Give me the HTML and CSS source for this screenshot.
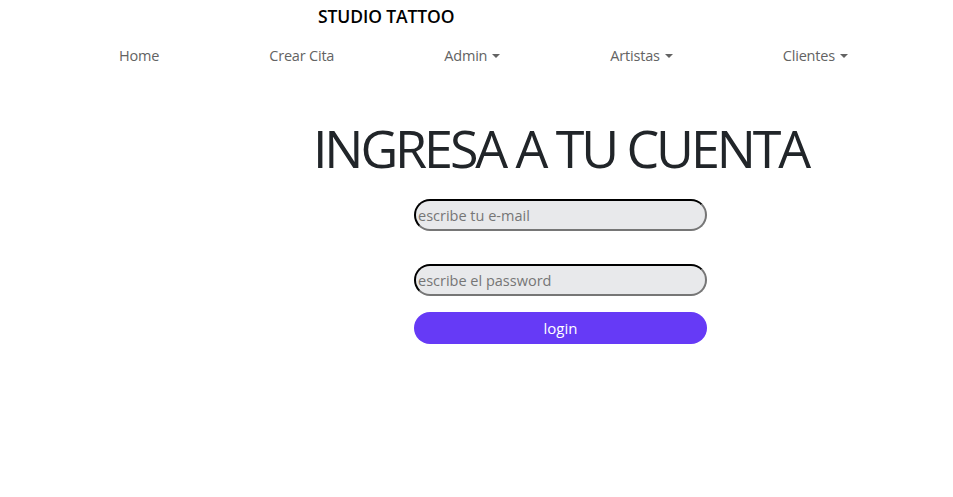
FILE: index.html
```html
<!DOCTYPE html>
<html lang="es">
<head>
<meta charset="utf-8">
<title>Studio Tattoo</title>
<link rel="stylesheet" href="styles.css">
</head>
<body>
<header class="header">
  <div class="brand">STUDIO TATTOO</div>
  <nav class="nav">
    <a class="nav-link" href="#">Home</a>
    <a class="nav-link" href="#">Crear Cita</a>
    <a class="nav-link dropdown" href="#">Admin</a>
    <a class="nav-link dropdown" href="#">Artistas</a>
    <a class="nav-link dropdown" href="#">Clientes</a>
  </nav>
</header>
<main class="main">
  <h1 class="title">INGRESA A TU CUENTA</h1>
  <form class="form">
    <input class="field" type="email" placeholder="escribe tu e-mail">
    <input class="field" type="password" placeholder="escribe el password">
    <button class="btn" type="button">login</button>
  </form>
</main>
</body>
</html>
```
FILE: styles.css
```css
* { box-sizing: border-box; }
body {
  margin: 0;
  font-family: "Open Sans", "Noto Sans", sans-serif;
  background: #fff;
  color: #212529;
}
.header { display: flex; flex-direction: column; }
.brand {
  padding-left: 318px;
  font-size: 17.5px;
  font-weight: 600;
  line-height: 33px;
  color: #000;
  letter-spacing: -0.1px;
}
.nav {
  display: flex;
  justify-content: space-around;
  padding: 1px 50px 0 64px;
}
.nav-link {
  padding: 8px 16px;
  font-size: 14.5px;
  line-height: 28px;
  color: #636363;
  text-decoration: none;
  letter-spacing: -0.2px;
}
.dropdown::after {
  content: "";
  display: inline-block;
  margin-left: 5px;
  vertical-align: 3px;
  border-top: 4px solid #636363;
  border-left: 4px solid transparent;
  border-right: 4px solid transparent;
}
.main {
  display: flex;
  flex-direction: column;
  align-items: center;
  padding-left: 168px;
}
.title {
  margin: 0;
  padding-top: 35px;
  font-size: 52px;
  font-weight: 400;
  line-height: 70px;
  color: #212529;
  letter-spacing: -3.1px;
}
.form {
  display: flex;
  flex-direction: column;
  width: 293px;
  margin-top: 16px;
}
.field {
  height: 32px;
  border: 2px inset #767676;
  border-color: #2b2b2b #767676 #767676 #2b2b2b;
  border-radius: 16px;
  background: #e8e9eb;
  padding: 0 2px;
  font-family: inherit;
  font-size: 14.5px;
  color: #333;
  margin-bottom: 33px;
}
.field + .field { margin-bottom: 16px; }
.field::placeholder { color: #767676; }
.btn {
  height: 32px;
  border: none;
  border-radius: 16px;
  background: #663af6;
  color: #fff;
  font-family: inherit;
  font-size: 15px;
}
```
